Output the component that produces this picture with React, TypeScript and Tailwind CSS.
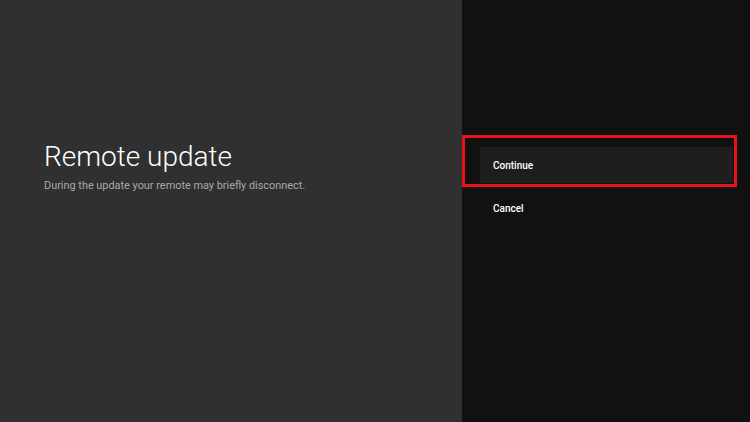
import React from "react";

const options = ["Continue", "Cancel"];

export default function App() {
    return (
        <div className="flex w-[750px] h-[422px] overflow-hidden font-['Roboto',sans-serif]">
            {/* Left: description */}
            <div className="w-[462px] h-full bg-[#303030] flex flex-col pl-[44px] pt-[139px]">
                <h1 className="text-[28px] leading-[36px] font-light text-white">Remote update</h1>
                <p className="text-[10.9px] leading-[14px] mt-[4px] text-[#a9a9a9]">
                    During the update your remote may briefly disconnect.
                </p>
            </div>

            {/* Right: actions */}
            <div className="relative flex-1 h-full bg-[#111111]">
                <div className="flex flex-col gap-[7px] pt-[147px] pl-[18px] pr-[17px]">
                    {options.map((o, i) => (
                        <div
                            key={o}
                            className={`h-[36px] flex items-center px-[13px] text-[10px] font-medium text-white ${i === 0 ? "bg-[#1e1e1e]" : ""}`}
                        >
                            {o}
                        </div>
                    ))}
                </div>
                {/* highlight annotation */}
                <div className="absolute left-0 top-[135px] w-[275px] h-[52px] border-[3px] border-[#e8121a]" />
            </div>
        </div>
    );
}
